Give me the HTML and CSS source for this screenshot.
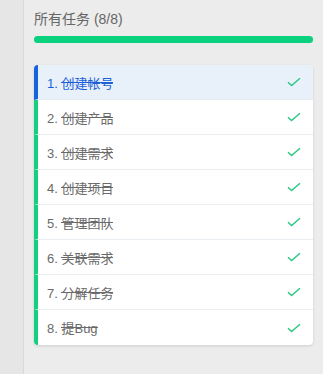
FILE: index.html
```html
<!DOCTYPE html>
<html lang="zh-CN">
<head>
    <meta charset="UTF-8">
    <meta name="viewport" content="width=device-width, initial-scale=1.0">
    <title>所有任务</title>
    <link rel="stylesheet" href="styles.css">
</head>
<body>
    <div class="layout">
        <div class="sidebar"></div>
        <div class="main">
            <div class="task-title">所有任务 (8/8)</div>
            <div class="progress"><div class="progress-bar" style="width: 100%;"></div></div>
            <ul class="task-list">
                <li class="task active"><span class="task-name">1. <del>创建帐号</del></span><svg class="check" viewBox="0 0 14 10"><path d="M1 5.2 L4.6 8.6 L13 1.2"/></svg></li>
                <li class="task"><span class="task-name">2. <del>创建产品</del></span><svg class="check" viewBox="0 0 14 10"><path d="M1 5.2 L4.6 8.6 L13 1.2"/></svg></li>
                <li class="task"><span class="task-name">3. <del>创建需求</del></span><svg class="check" viewBox="0 0 14 10"><path d="M1 5.2 L4.6 8.6 L13 1.2"/></svg></li>
                <li class="task"><span class="task-name">4. <del>创建项目</del></span><svg class="check" viewBox="0 0 14 10"><path d="M1 5.2 L4.6 8.6 L13 1.2"/></svg></li>
                <li class="task"><span class="task-name">5. <del>管理团队</del></span><svg class="check" viewBox="0 0 14 10"><path d="M1 5.2 L4.6 8.6 L13 1.2"/></svg></li>
                <li class="task"><span class="task-name">6. <del>关联需求</del></span><svg class="check" viewBox="0 0 14 10"><path d="M1 5.2 L4.6 8.6 L13 1.2"/></svg></li>
                <li class="task"><span class="task-name">7. <del>分解任务</del></span><svg class="check" viewBox="0 0 14 10"><path d="M1 5.2 L4.6 8.6 L13 1.2"/></svg></li>
                <li class="task"><span class="task-name">8. <del>提Bug</del></span><svg class="check" viewBox="0 0 14 10"><path d="M1 5.2 L4.6 8.6 L13 1.2"/></svg></li>
            </ul>
        </div>
    </div>
</body>
</html>
```

FILE: styles.css
```css
body {
    margin: 0;
    font-family: "Liberation Sans", "Noto Sans CJK SC", sans-serif;
    background-color: #ececec;
}
.layout {
    display: flex;
    height: 374px;
}
.sidebar {
    width: 23px;
    background-color: #e6e6e6;
    border-right: 1px solid #d9d9d9;
}
.main {
    flex: 1;
    padding: 10px 10px 0 10px;
}
.task-title {
    font-size: 14px;
    color: #666;
    line-height: 18px;
}
.progress {
    margin-top: 8px;
    height: 7px;
    border-radius: 4px;
    background-color: #ddd;
}
.progress-bar {
    height: 100%;
    border-radius: 4px;
    background-color: #0ad17e;
}
.task-list {
    list-style: none;
    margin: 22px 0 0 0;
    padding: 0;
    background-color: #fff;
    border-radius: 4px;
    box-shadow: 0 1px 3px rgba(0,0,0,0.12);
    overflow: hidden;
}
.task {
    display: flex;
    align-items: center;
    justify-content: space-between;
    height: 34px;
    padding: 0 12px 0 9px;
    border-left: 4px solid #12cf82;
    border-bottom: 1px solid #e8edf2;
}
.task:last-child {
    border-bottom: none;
    height: 35px;
}
.task.active {
    background-color: #e8f0f9;
    border-left-color: #1563dd;
}
.task-name {
    font-size: 13px;
    color: #6a6a6a;
}
.task-name del {
    text-decoration: none;
    background: linear-gradient(currentColor, currentColor) no-repeat 0 6px / 100% 1px;
}
.task.active .task-name {
    color: #1a5fd8;
}
.check {
    width: 14px;
    height: 10px;
    fill: none;
    stroke: #2cc985;
    stroke-width: 1.5;
}
```
